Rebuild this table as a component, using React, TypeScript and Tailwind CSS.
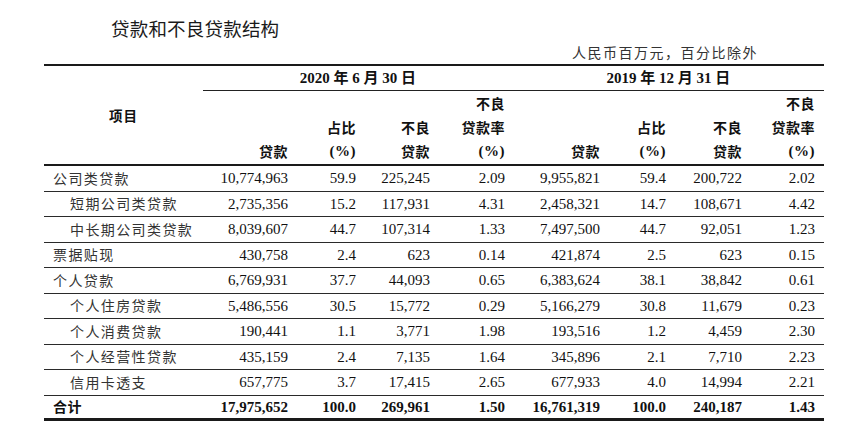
import React from "react";

const grid =
  "grid grid-cols-[159px_93px_68px_74px_75px_95px_66px_76px_74px]";

const cjk = "font-['Noto_Sans_CJK_SC',sans-serif]";
const num = "font-['Liberation_Serif','Noto_Sans_CJK_SC',serif]";

type Row = {
  name: string;
  indent?: boolean;
  total?: boolean;
  values: string[];
};

const rows: Row[] = [
  { name: "公司类贷款", values: ["10,774,963", "59.9", "225,245", "2.09", "9,955,821", "59.4", "200,722", "2.02"] },
  { name: "短期公司类贷款", indent: true, values: ["2,735,356", "15.2", "117,931", "4.31", "2,458,321", "14.7", "108,671", "4.42"] },
  { name: "中长期公司类贷款", indent: true, values: ["8,039,607", "44.7", "107,314", "1.33", "7,497,500", "44.7", "92,051", "1.23"] },
  { name: "票据贴现", values: ["430,758", "2.4", "623", "0.14", "421,874", "2.5", "623", "0.15"] },
  { name: "个人贷款", values: ["6,769,931", "37.7", "44,093", "0.65", "6,383,624", "38.1", "38,842", "0.61"] },
  { name: "个人住房贷款", indent: true, values: ["5,486,556", "30.5", "15,772", "0.29", "5,166,279", "30.8", "11,679", "0.23"] },
  { name: "个人消费贷款", indent: true, values: ["190,441", "1.1", "3,771", "1.98", "193,516", "1.2", "4,459", "2.30"] },
  { name: "个人经营性贷款", indent: true, values: ["435,159", "2.4", "7,135", "1.64", "345,896", "2.1", "7,710", "2.23"] },
  { name: "信用卡透支", indent: true, values: ["657,775", "3.7", "17,415", "2.65", "677,933", "4.0", "14,994", "2.21"] },
  { name: "合计", total: true, values: ["17,975,652", "100.0", "269,961", "1.50", "16,761,319", "100.0", "240,187", "1.43"] },
];

// three stacked header lines, bottom aligned
function HeadCell({ lines, last }: { lines: string[]; last?: boolean }) {
  return (
    <div
      className={`flex flex-col justify-end items-end pb-[1px] ${
        last ? "pr-[9px]" : "pr-2"
      } text-[14px] leading-[24px] font-bold tracking-[0.5px]`}
    >
      {lines.map((l, i) => (
        <span key={i} className={l === "(%)" ? `${num} text-[15px]` : cjk}>
          {l}
        </span>
      ))}
    </div>
  );
}

const groupHead = [
  ["贷款"],
  ["占比", "(%)"],
  ["不良", "贷款"],
  ["不良", "贷款率", "(%)"],
];

export default function App() {
  return (
    <div className="w-[865px] h-[447px] bg-white text-[#111]">
      <p
        className={`${cjk} pl-[111px] pt-[16px] text-[18.5px] leading-[24px] tracking-[0.2px] text-[#1a1a1a]`}
      >
        贷款和不良贷款结构
      </p>
      <div className="flex justify-end pr-[107px] mt-[2px]">
        <span
          className={`${cjk} text-[14px] leading-[20px] tracking-[1.5px] text-[#333]`}
        >
          人民币百万元，百分比除外
        </span>
      </div>

      <div className="ml-[44px] mt-[2px] w-[780px]">
        {/* header */}
        <div className={`${grid} border-t-2 border-b-2 border-[#1a1a1a]`}>
          <div
            className={`${cjk} row-span-2 flex items-center justify-center font-bold text-[13.5px] tracking-[1px]`}
          >
            项目
          </div>
          <div
            className={`${num} col-span-4 h-[25px] flex items-center justify-center text-[15px] font-bold border-b border-[#222]`}
          >
            2020 年 6 月 30 日
          </div>
          <div
            className={`${num} col-span-4 h-[25px] flex items-center justify-center text-[15px] font-bold border-b border-[#222]`}
          >
            2019 年 12 月 31 日
          </div>
          {groupHead.map((g, i) => (
            <HeadCell key={"a" + i} lines={g} />
          ))}
          {groupHead.map((g, i) => (
            <HeadCell key={"b" + i} lines={g} last={i === 3} />
          ))}
        </div>

        {/* body */}
        {rows.map((r, ri) => (
          <div
            key={r.name}
            className={`${grid} h-[25.5px] items-center ${
              ri === rows.length - 1
                ? "border-b-[3px] border-[#1a1a1a]"
                : "border-b-[1.5px] border-[#2a2a2a]"
            } ${r.total ? "font-bold" : ""}`}
          >
            <div
              className={`${cjk} text-[14px] ${
                r.total ? "pl-[9px] tracking-[0.5px] text-[#111]" : "tracking-[1.4px] text-[#333]"
              } ${r.indent ? "pl-[26px]" : "pl-[9px]"}`}
            >
              {r.name}
            </div>
            {r.values.map((v, i) => (
              <div
                key={i}
                className={`${num} text-right text-[15px] ${
                  i === 7 ? "pr-[9px]" : "pr-2"
                }`}
              >
                {v}
              </div>
            ))}
          </div>
        ))}
      </div>
    </div>
  );
}
